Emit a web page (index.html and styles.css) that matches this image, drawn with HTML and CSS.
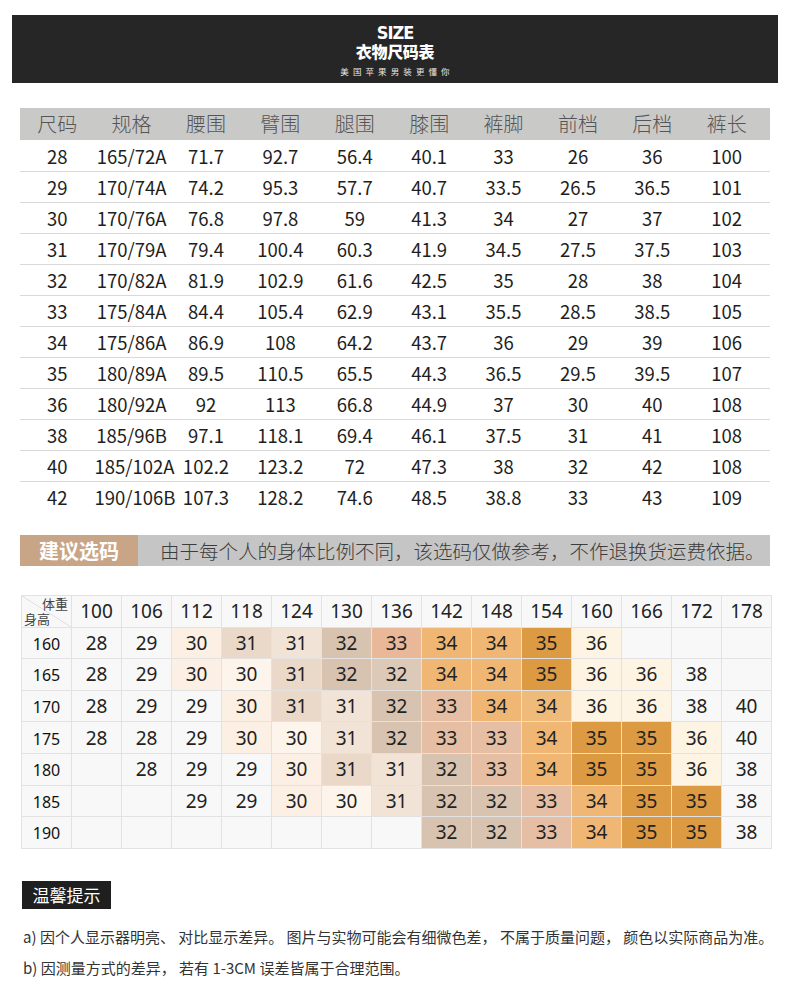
FILE: index.html
```html
<!DOCTYPE html>
<html lang="zh-CN">
<head>
<meta charset="utf-8">
<title>衣物尺码表</title>
<link rel="stylesheet" href="styles.css">
</head>
<body>
<div class="page">
  <header class="band">
    <div class="band-en">SIZE</div>
    <div class="band-cn">衣物尺码表</div>
    <div class="band-sub">美国苹果男装更懂你</div>
  </header>

  <section class="sizes">
    <div class="srow shead">
      <div>尺码</div><div>规格</div><div>腰围</div><div>臂围</div><div>腿围</div><div>膝围</div><div>裤脚</div><div>前档</div><div>后档</div><div>裤长</div>
    </div>
    <div class="srow"><div>28</div><div>165/72A</div><div>71.7</div><div>92.7</div><div>56.4</div><div>40.1</div><div>33</div><div>26</div><div>36</div><div>100</div></div>
    <div class="srow"><div>29</div><div>170/74A</div><div>74.2</div><div>95.3</div><div>57.7</div><div>40.7</div><div>33.5</div><div>26.5</div><div>36.5</div><div>101</div></div>
    <div class="srow"><div>30</div><div>170/76A</div><div>76.8</div><div>97.8</div><div>59</div><div>41.3</div><div>34</div><div>27</div><div>37</div><div>102</div></div>
    <div class="srow"><div>31</div><div>170/79A</div><div>79.4</div><div>100.4</div><div>60.3</div><div>41.9</div><div>34.5</div><div>27.5</div><div>37.5</div><div>103</div></div>
    <div class="srow"><div>32</div><div>170/82A</div><div>81.9</div><div>102.9</div><div>61.6</div><div>42.5</div><div>35</div><div>28</div><div>38</div><div>104</div></div>
    <div class="srow"><div>33</div><div>175/84A</div><div>84.4</div><div>105.4</div><div>62.9</div><div>43.1</div><div>35.5</div><div>28.5</div><div>38.5</div><div>105</div></div>
    <div class="srow"><div>34</div><div>175/86A</div><div>86.9</div><div>108</div><div>64.2</div><div>43.7</div><div>36</div><div>29</div><div>39</div><div>106</div></div>
    <div class="srow"><div>35</div><div>180/89A</div><div>89.5</div><div>110.5</div><div>65.5</div><div>44.3</div><div>36.5</div><div>29.5</div><div>39.5</div><div>107</div></div>
    <div class="srow"><div>36</div><div>180/92A</div><div>92</div><div>113</div><div>66.8</div><div>44.9</div><div>37</div><div>30</div><div>40</div><div>108</div></div>
    <div class="srow"><div>38</div><div>185/96B</div><div>97.1</div><div>118.1</div><div>69.4</div><div>46.1</div><div>37.5</div><div>31</div><div>41</div><div>108</div></div>
    <div class="srow"><div>40</div><div>185/102A</div><div>102.2</div><div>123.2</div><div>72</div><div>47.3</div><div>38</div><div>32</div><div>42</div><div>108</div></div>
    <div class="srow"><div>42</div><div>190/106B</div><div>107.3</div><div>128.2</div><div>74.6</div><div>48.5</div><div>38.8</div><div>33</div><div>43</div><div>109</div></div>
  </section>

  <div class="advice">
    <div class="advice-tag">建议选码</div>
    <div class="advice-text">由于每个人的身体比例不同，该选码仅做参考，不作退换货运费依据。</div>
  </div>

  <section class="fit">
    <div class="corner"><span class="corner-w">体重</span><span class="corner-h">身高</span></div>
    <div class="wt">100</div><div class="wt">106</div><div class="wt">112</div><div class="wt">118</div><div class="wt">124</div><div class="wt">130</div><div class="wt">136</div><div class="wt">142</div><div class="wt">148</div><div class="wt">154</div><div class="wt">160</div><div class="wt">166</div><div class="wt">172</div><div class="wt">178</div>

    <div class="ht">160</div>
    <div>28</div><div>29</div><div class="a">30</div><div class="c">31</div><div class="d">31</div><div class="e">32</div><div class="f2">33</div><div class="g">34</div><div class="g">34</div><div class="h">35</div><div class="i">36</div><div></div><div></div><div></div>

    <div class="ht">165</div>
    <div>28</div><div>29</div><div class="a">30</div><div class="b">30</div><div class="c">31</div><div class="e">32</div><div class="e2">32</div><div class="g">34</div><div class="g">34</div><div class="h">35</div><div class="i">36</div><div class="i">36</div><div>38</div><div></div>

    <div class="ht">170</div>
    <div>28</div><div>29</div><div>29</div><div class="a">30</div><div class="c">31</div><div class="d">31</div><div class="e">32</div><div class="f">33</div><div class="g">34</div><div class="g2">34</div><div class="i">36</div><div class="i">36</div><div>38</div><div>40</div>

    <div class="ht">175</div>
    <div>28</div><div>28</div><div>29</div><div class="a">30</div><div class="b">30</div><div class="d">31</div><div class="e">32</div><div class="f">33</div><div class="f">33</div><div class="g">34</div><div class="h">35</div><div class="h">35</div><div class="i">36</div><div>40</div>

    <div class="ht">180</div>
    <div></div><div>28</div><div>29</div><div>29</div><div class="a">30</div><div class="c">31</div><div class="d">31</div><div class="e">32</div><div class="f">33</div><div class="g">34</div><div class="h">35</div><div class="h">35</div><div class="i">36</div><div>38</div>

    <div class="ht">185</div>
    <div></div><div></div><div>29</div><div>29</div><div class="a">30</div><div class="b">30</div><div class="d">31</div><div class="e">32</div><div class="e">32</div><div class="f">33</div><div class="g">34</div><div class="h">35</div><div class="h">35</div><div>38</div>

    <div class="ht">190</div>
    <div></div><div></div><div></div><div></div><div></div><div></div><div></div><div class="e">32</div><div class="e">32</div><div class="f">33</div><div class="g">34</div><div class="h">35</div><div class="h">35</div><div>38</div>
  </section>

  <div class="tip">温馨提示</div>
  <div class="notes">
    <p>a) 因个人显示器明亮、 对比显示差异。 图片与实物可能会有细微色差， 不属于质量问题， 颜色以实际商品为准。</p>
    <p>b) 因测量方式的差异， 若有 1-3CM 误差皆属于合理范围。</p>
  </div>
</div>
</body>
</html>
```

FILE: styles.css
```css
* { box-sizing: border-box; }
html, body { margin: 0; padding: 0; background: #ffffff; }
body {
  font-family: "Noto Sans CJK SC", "Noto Sans", sans-serif;
  color: #222;
}
.page { width: 790px; padding-top: 15px; }

/* header band */
.band {
  margin: 0 12px;
  height: 68px;
  background: #262626;
  color: #fff;
  display: flex;
  flex-direction: column;
  align-items: center;
  padding-top: 9px;
}
.band-en {
  font-family: "DejaVu Sans Condensed", "DejaVu Sans", sans-serif;
  font-stretch: condensed;
  font-weight: 700;
  font-size: 18px;
  line-height: 18px;
  height: 18px;
  letter-spacing: -1px;
}
.band-cn {
  font-weight: 900;
  font-size: 16px;
  line-height: 18px;
  height: 18px;
  letter-spacing: -0.3px;
}
.band-sub {
  margin-top: 6px;
  font-size: 8.5px;
  line-height: 10px;
  height: 10px;
  letter-spacing: 4.1px;
  padding-left: 4px;
  color: #e6e6e6;
}

/* size table */
.sizes { margin: 25px 20px 0; width: 750px; }
.srow {
  display: grid;
  grid-template-columns: repeat(10, 74.4px);
  height: 31px;
  border-top: 1px solid #d9d9d9;
  align-items: center;
  text-align: center;
  font-size: 18.5px;
  color: #1e1e1e;
  line-height: 30px;
}
.srow.shead {
  height: 32px;
  border-top: 0;
  background: #c9c9c8;
  font-size: 20px;
  font-weight: 300;
  color: #555;
  line-height: 32px;
}
.shead + .srow { border-top: 0; }

/* advice banner */
.advice {
  margin: 23px 20px 0;
  width: 750px;
  height: 31px;
  display: flex;
  background: #c5c5c5;
}
.advice-tag {
  width: 118px;
  background: #c9a588;
  color: #fff;
  font-weight: 700;
  font-size: 20px;
  line-height: 31px;
  text-align: center;
}
.advice-text {
  padding-left: 22px;
  font-size: 19.5px;
  line-height: 31px;
  font-weight: 300;
  color: #3c3c3c;
  white-space: nowrap;
}

/* fit table */
.fit {
  margin: 29px 0 0 21px;
  width: 751px;
  display: grid;
  grid-template-columns: repeat(15, 49px);
  grid-auto-rows: 30.6px;
  gap: 1px;
  padding: 1px;
  background: #e2e2e2;
}
.fit > div {
  background: #f8f8f8;
  display: flex;
  align-items: center;
  justify-content: center;
  font-family: "Noto Sans", "Noto Sans CJK SC", sans-serif;
  font-size: 19px;
  color: #222;
}
.fit > .ht { font-size: 16px; color: #111; font-weight: 400; padding-top: 2px; }
.fit > .wt { font-size: 19px; color: #222; }
.fit > .corner {
  position: relative;
  background: #f8f8f8 linear-gradient(to top right, transparent calc(50% - 0.6px), #d6d6d6 50%, transparent calc(50% + 0.6px));
  font-family: "Noto Sans CJK SC", sans-serif;
  font-size: 13px;
  color: #444;
}
.corner-w { position: absolute; right: 3px; top: 0; line-height: 16px; }
.corner-h { position: absolute; left: 2px; bottom: 0; line-height: 16px; }

.fit > .a { background: #fcefe3; }
.fit > .b { background: #fdf4ec; }
.fit > .c { background: #ead8c8; }
.fit > .d { background: #f1e3d6; }
.fit > .e { background: #d8c3b0; }
.fit > .e2 { background: #ddc9b7; }
.fit > .f { background: #e6bea3; }
.fit > .f2 { background: #e8b898; }
.fit > .g { background: #efb773; }
.fit > .g2 { background: #efbb7a; }
.fit > .h { background: #dc9a42; }
.fit > .i { background: #fdf4e4; }

/* tips */
.tip {
  margin: 32px 0 0 22px;
  width: 89px;
  height: 28px;
  background: #1f1f1f;
  color: #fff;
  font-size: 17px;
  line-height: 28px;
  text-align: center;
}
.notes { margin: 12px 0 0 23px; }
.notes p {
  margin: 0;
  font-size: 15px;
  line-height: 31px;
  color: #333;
  white-space: nowrap;
}
```
